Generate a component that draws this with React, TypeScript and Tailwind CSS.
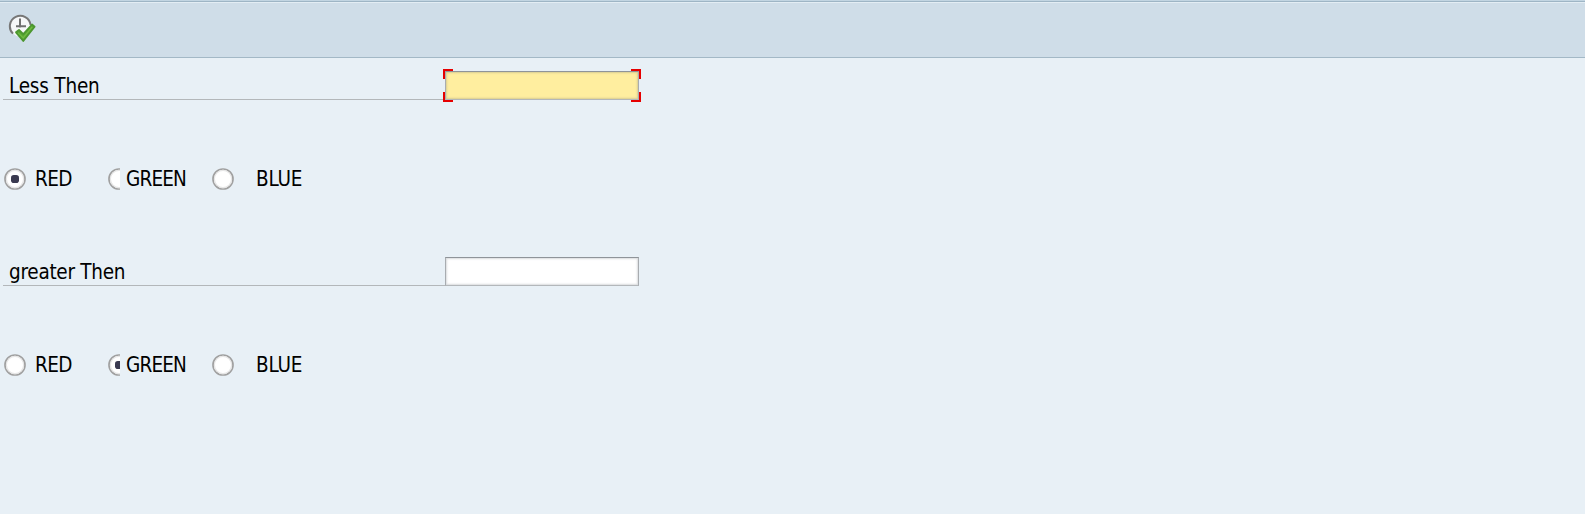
type RadioProps = { checked?: boolean; clipped?: boolean };

function Radio({ checked, clipped }: RadioProps) {
  return (
    <span className={`block h-[22px] shrink-0 overflow-hidden ${clipped ? "w-3" : "w-[22px]"}`}>
      <svg width="22" height="22" viewBox="0 0 22 22" className="max-w-none">
        <circle cx="11" cy="11" r="10" fill="#fff" stroke="#a0a0a0" strokeWidth="1.7" />
        <circle cx="11" cy="11" r="8.6" fill="none" stroke="#e6e6e6" strokeWidth="1.2" />
        {checked && <rect x="7" y="7" width="8" height="8" rx="2.8" fill="#3a3a50" />}
      </svg>
    </span>
  );
}

function Field({ label, labelClass, focused }: { label: string; labelClass: string; focused?: boolean }) {
  return (
    <div className="flex h-[29px] pl-[3px]">
      <div className="flex w-[442px] items-center border-b border-[#b3b7ba] pt-[2px] pl-[6px]">
        <span className={labelClass}>{label}</span>
      </div>
      <div className="relative h-[29px] w-[194px]">
        <input
          aria-label={label}
          className={`block h-full w-full border border-t-[#8f9499] border-r-[#a8acb0] border-b-[#b3b7ba] border-l-[#a8acb0] px-1 outline-none ${
            focused
              ? "bg-[#ffee9f] shadow-[inset_0_0_2px_1px_#d8cc93]"
              : "bg-white shadow-[inset_0_0_2px_1px_#d9dbde]"
          }`}
        />
        {focused && (
          <>
            <i className="absolute -top-[2px] -left-[2px] h-[10px] w-[10px] border-t-2 border-l-2 border-[#e60000]" />
            <i className="absolute -top-[2px] -right-[2px] h-[10px] w-[10px] border-t-2 border-r-2 border-[#e60000]" />
            <i className="absolute -bottom-[2px] -left-[2px] h-[10px] w-[10px] border-b-2 border-l-2 border-[#e60000]" />
            <i className="absolute -right-[2px] -bottom-[2px] h-[10px] w-[10px] border-r-2 border-b-2 border-[#e60000]" />
          </>
        )}
      </div>
    </div>
  );
}

function ColorRow({ selected }: { selected: "RED" | "GREEN" | "BLUE" }) {
  return (
    <div className="flex h-[22px] items-center pl-1">
      <div className="flex h-[22px] w-[104px] items-center">
        <Radio checked={selected === "RED"} />
        <span className="pb-px pl-[9px] tracking-[-0.6px]">RED</span>
      </div>
      <div className="flex h-[22px] w-[104px] items-center">
        <Radio checked={selected === "GREEN"} clipped />
        <span className="pb-px pl-[6px] tracking-[-0.85px]">GREEN</span>
      </div>
      <div className="flex h-[22px] items-center">
        <Radio checked={selected === "BLUE"} />
        <span className="pb-px pl-[22px] tracking-[-0.2px]">BLUE</span>
      </div>
    </div>
  );
}

function ExecuteIcon() {
  return (
    <svg width="28" height="30" viewBox="0 0 28 30">
      <circle cx="12.3" cy="12" r="10.6" fill="#f6f7f8" />
      <path d="M5 19.6A10.4 10.4 0 1 1 22.6 11" fill="none" stroke="#777" strokeWidth="2" />
      <path d="M12 4.5v9M8 12.3h10" fill="none" stroke="#707070" strokeWidth="2" />
      <path d="M8 18.3l3-2.4 4.3 4.3L24 10.5l2.6 2.2L15.3 27z" fill="#58a832" stroke="#4c9630" strokeWidth="1.8" strokeLinejoin="round" />
      <path d="M10.2 18.8l5 5 9-11" fill="none" stroke="#72bb43" strokeWidth="1.2" />
    </svg>
  );
}

export default function App() {
  return (
    <div className="h-[514px] w-full overflow-hidden bg-[#e8f0f6] font-['DejaVu_Sans_Condensed','DejaVu_Sans',sans-serif] text-[20.5px] leading-[24px] text-black">
      <header className="h-[58px] border-b border-[#a3b8c6] bg-[#cfdde8]">
        <div className="h-full border-t border-[#c2d5e2]">
          <div className="h-full border-t border-[#9eb5c5] pt-[12px] pl-[8px] shadow-[inset_0_1px_0_#e3edf4]">
            <button aria-label="Execute" className="block">
              <ExecuteIcon />
            </button>
          </div>
        </div>
      </header>
      <main className="flex flex-col pt-[13px]">
        <Field label="Less Then" labelClass="tracking-[-0.2px]" focused />
        <div className="pt-[68px] pb-[67px]">
          <ColorRow selected="RED" />
        </div>
        <Field label="greater Then" labelClass="tracking-[-0.27px]" />
        <div className="pt-[68px]">
          <ColorRow selected="GREEN" />
        </div>
      </main>
    </div>
  );
}
